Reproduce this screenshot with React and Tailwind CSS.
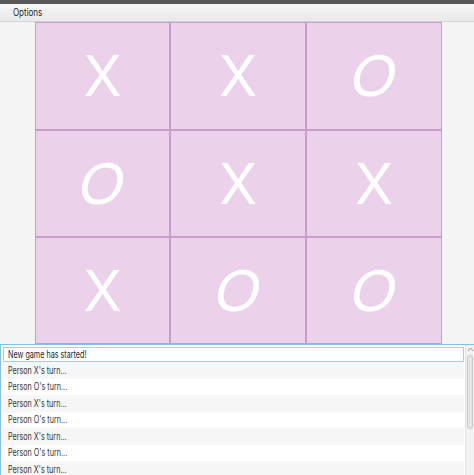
import React from "react";

const board = ["X", "X", "O", "O", "X", "X", "X", "O", "O"];

const log = [
  "Person X's turn...",
  "Person O's turn...",
  "Person X's turn...",
  "Person O's turn...",
  "Person X's turn...",
  "Person O's turn...",
  "Person X's turn...",
];

const Cell = ({ mark }) => (
  <div className="flex items-center justify-center border border-[#c99dcb] bg-[#ebd1ea]">
    <span
      className={
        "text-[56px] leading-none font-normal text-white select-none " +
        (mark === "O" ? "-skew-x-12 scale-x-110" : "")
      }
      style={{ fontFamily: "Inter, 'DejaVu Sans', sans-serif" }}
    >
      {mark}
    </span>
  </div>
);

export default function App() {
  return (
    <div
      className="w-[474px] h-[475px] overflow-hidden bg-[#f4f4f4] flex flex-col"
      style={{ fontFamily: "Inter, 'Liberation Sans', sans-serif" }}
    >
      <div className="h-[4px] bg-[#585858]" />
      <div className="h-[18px] flex items-center pl-[13px] text-[10px] text-[#222] bg-gradient-to-b from-[#f6f6f6] to-[#e9e9e9] border-b border-[#d4d4d4]">
        <span className="inline-block origin-left scale-x-[0.8]">Options</span>
      </div>

      <div className="pl-[35px]">
        <div className="grid grid-cols-[135px_136px_136px] grid-rows-[108px_107px_107px] w-[407px]">
          {board.map((m, i) => (
            <Cell key={i} mark={m} />
          ))}
        </div>
      </div>

      <div className="flex-1 flex border-t border-l border-[#7ec3e6] bg-white min-h-0">
        <div className="flex-1 pt-[2px] pl-[2px] pr-[1px]">
          <div className="h-[15px] flex items-center pl-[4px] text-[10px] text-[#222] bg-white border border-[#98d3e8]">
            <span className="inline-block origin-left scale-x-[0.72]">New game has started!</span>
          </div>
          {log.map((t, i) => (
            <div
              key={i}
              className={
                "h-[16.5px] flex items-center pl-[5px] text-[10px] text-[#333] " +
                (i % 2 === 0 ? "bg-[#f7f7f7]" : "bg-white")
              }
            >
              <span className="inline-block origin-left scale-x-[0.72]">{t}</span>
            </div>
          ))}
        </div>
        <div className="w-[9px] flex flex-col bg-[#f2f2f2] border-l border-[#e2e2e2]">
          <div className="h-[10px] flex items-start justify-center pt-[2px]">
            <svg width="7" height="5" viewBox="0 0 7 5">
              <path d="M1 4 L3.5 1 L6 4" stroke="#9a9a9a" strokeWidth="1" fill="none" />
            </svg>
          </div>
          <div className="h-[74px] mx-[1px] rounded-sm border border-[#c9c9c9] bg-[#e6e6e6]" />
        </div>
      </div>
    </div>
  );
}
